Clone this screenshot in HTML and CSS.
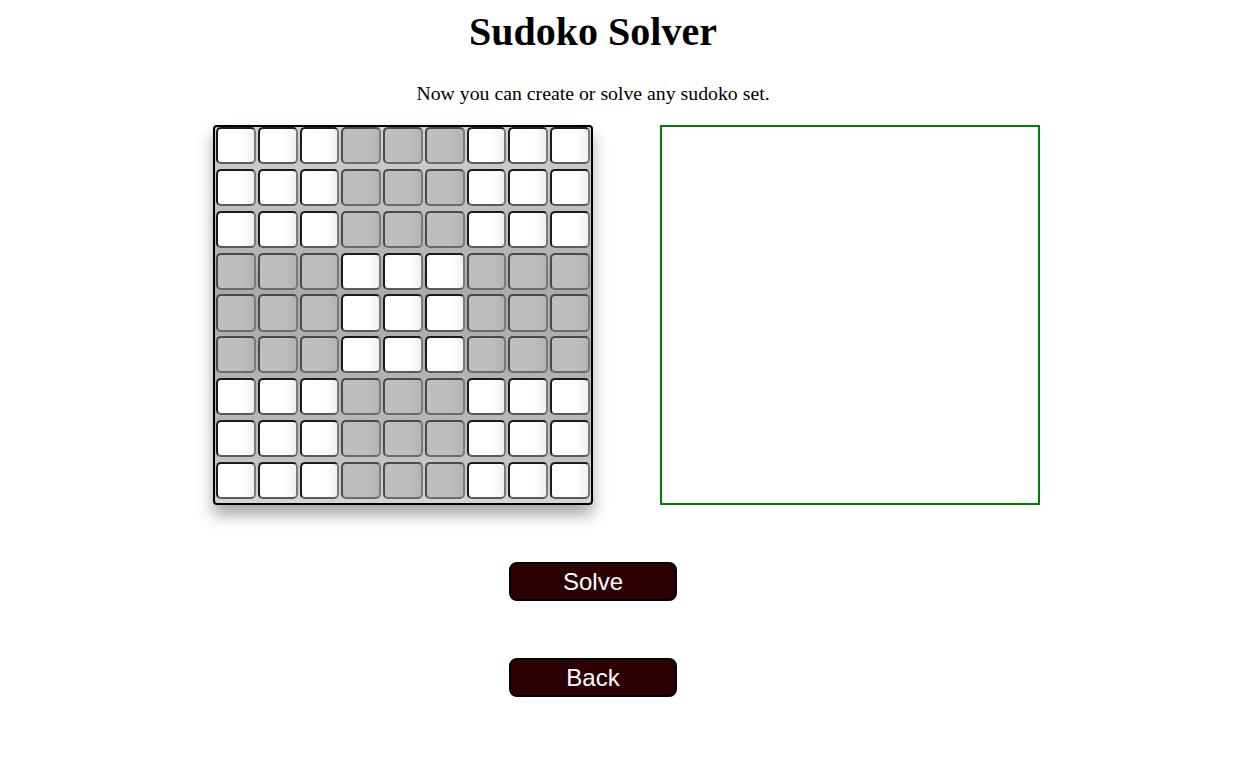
FILE: index.html
```html
<!DOCTYPE html>
<html lang="en">
<head>
<meta charset="utf-8">
<title>Sudoko Solver</title>
<link rel="stylesheet" href="styles.css">
</head>
<body>
<div class="page">
  <h1 class="title">Sudoko Solver</h1>
  <p class="subtitle">Now you can create or solve any sudoko set.</p>
  <div class="workspace">
    <div class="board">
      <input class="c"><input class="c"><input class="c"><input class="c g"><input class="c g"><input class="c g"><input class="c"><input class="c"><input class="c">
      <input class="c"><input class="c"><input class="c"><input class="c g"><input class="c g"><input class="c g"><input class="c"><input class="c"><input class="c">
      <input class="c"><input class="c"><input class="c"><input class="c g"><input class="c g"><input class="c g"><input class="c"><input class="c"><input class="c">
      <input class="c g"><input class="c g"><input class="c g"><input class="c"><input class="c"><input class="c"><input class="c g"><input class="c g"><input class="c g">
      <input class="c g"><input class="c g"><input class="c g"><input class="c"><input class="c"><input class="c"><input class="c g"><input class="c g"><input class="c g">
      <input class="c g"><input class="c g"><input class="c g"><input class="c"><input class="c"><input class="c"><input class="c g"><input class="c g"><input class="c g">
      <input class="c"><input class="c"><input class="c"><input class="c g"><input class="c g"><input class="c g"><input class="c"><input class="c"><input class="c">
      <input class="c"><input class="c"><input class="c"><input class="c g"><input class="c g"><input class="c g"><input class="c"><input class="c"><input class="c">
      <input class="c"><input class="c"><input class="c"><input class="c g"><input class="c g"><input class="c g"><input class="c"><input class="c"><input class="c">
    </div>
    <div class="output"></div>
  </div>
  <div class="actions">
    <button class="btn">Solve</button>
    <button class="btn">Back</button>
  </div>
</div>
</body>
</html>
```
FILE: styles.css
```css
html, body {
  margin: 0;
  padding: 0;
  background: #fff;
}

.page {
  width: 1170px;
  margin-left: 8px;
  padding-top: 9px;
  font-family: "Liberation Serif", "Times New Roman", serif;
  color: #000;
}

.title {
  margin: 0;
  font-size: 40px;
  line-height: 46px;
  font-weight: bold;
  text-align: center;
}

.subtitle {
  margin: 27px 0 0;
  font-size: 19.8px;
  line-height: 23px;
  text-align: center;
}

.workspace {
  display: flex;
  align-items: flex-start;
  gap: 67px;
  margin: 20px 0 0 205px;
}

.board {
  box-sizing: border-box;
  width: 380px;
  height: 380px;
  border: 2px solid #000;
  border-radius: 4px;
  padding: 0 1px 4px 1px;
  background: linear-gradient(to bottom, #d2d2d2 0%, #aaaaaa 45%, #b8b8b8 80%, #d4d4d4 100%);
  box-shadow: 0 10px 16px rgba(0, 0, 0, 0.35);
  display: grid;
  grid-template-columns: repeat(9, 1fr);
  grid-template-rows: repeat(9, 1fr);
  column-gap: 2px;
  row-gap: 4.8px;
}

.c {
  box-sizing: border-box;
  width: 100%;
  height: 100%;
  margin: 0;
  padding: 0;
  border: 2px solid;
  border-color: #1c1c1c #7a7a7a #5a5a5a #1c1c1c;
  border-radius: 5px;
  background: linear-gradient(to right, #ffffff 65%, #f0f0f0 100%);
  font-family: "Liberation Sans", Arial, sans-serif;
  font-size: 20px;
  text-align: center;
  outline: none;
}

.c.g {
  background: linear-gradient(to right, #bebebe 65%, #b4b4b4 100%);
  border-color: #4a4a4a #7a7a7a #6a6a6a #4a4a4a;
}

.output {
  box-sizing: border-box;
  width: 380px;
  height: 380px;
  border: 2px solid #008000;
}

.actions {
  display: flex;
  flex-direction: column;
  align-items: center;
  gap: 57px;
  margin-top: 57px;
}

.btn {
  box-sizing: border-box;
  width: 168px;
  height: 39px;
  margin: 0;
  padding: 0;
  border: 2px solid #000;
  border-radius: 8px;
  background: #2b0104;
  color: #fff;
  font-family: "Liberation Sans", Arial, sans-serif;
  font-size: 24px;
  line-height: 33px;
  text-align: center;
}
```
